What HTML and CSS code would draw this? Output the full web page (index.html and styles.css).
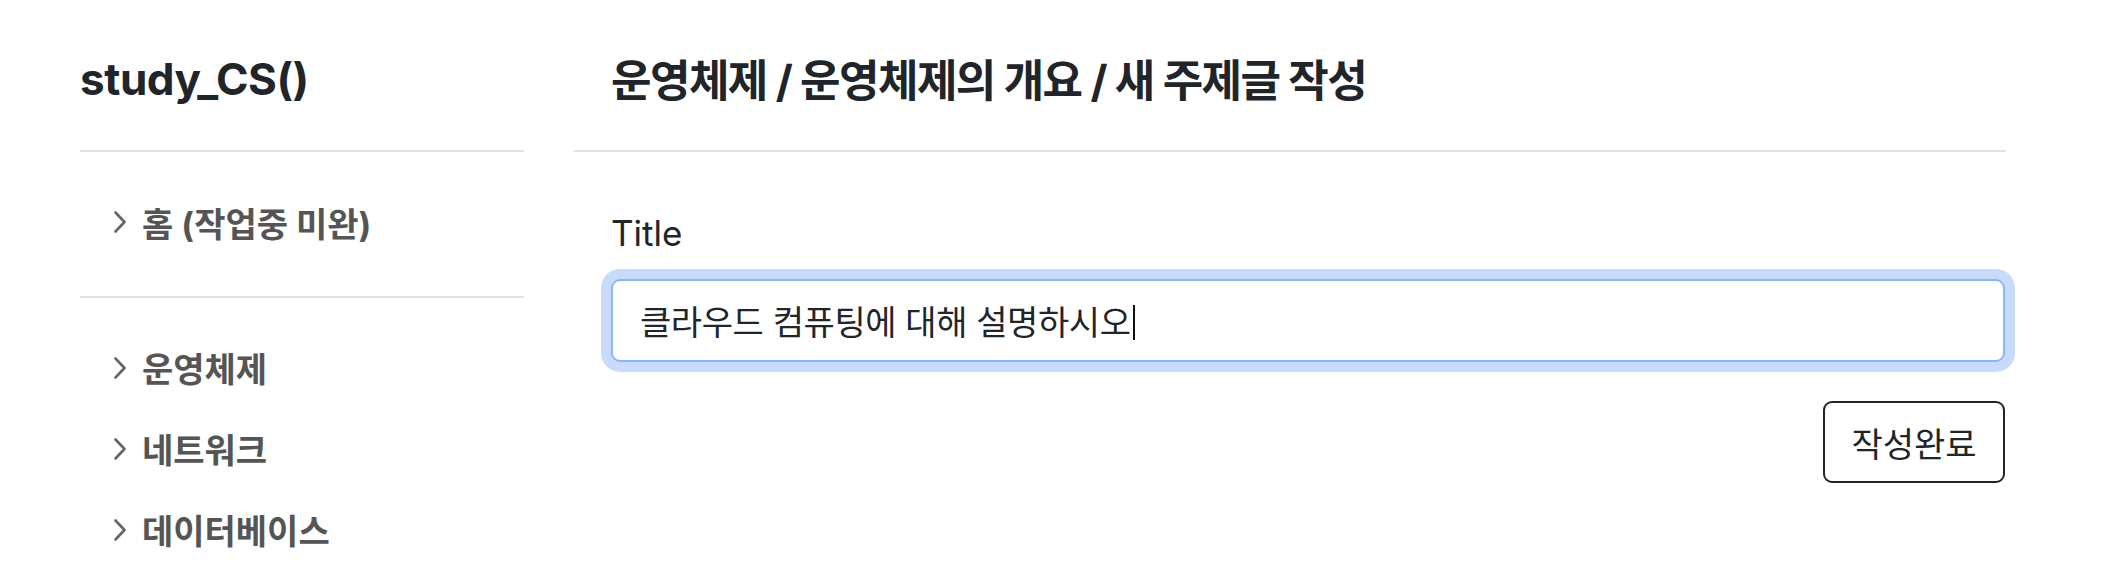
FILE: index.html
```html
<!DOCTYPE html>
<html lang="ko">
<head>
<meta charset="utf-8">
<title>study_CS()</title>
<link rel="stylesheet" href="styles.css">
</head>
<body>
<div class="layout">
  <aside class="sidebar">
    <div class="side-head">
      <h1 class="brand">study_CS()</h1>
    </div>
    <hr class="rule">
    <div class="home-block">
      <a class="nav-item" href="#">
        <svg class="chev" viewBox="0 0 12 22" width="12" height="22"><polyline points="1.5,1.5 10.5,11 1.5,20.5"/></svg>
        <span>홈 (작업중 미완)</span>
      </a>
    </div>
    <hr class="rule">
    <nav class="nav-list">
      <a class="nav-item" href="#">
        <svg class="chev" viewBox="0 0 12 22" width="12" height="22"><polyline points="1.5,1.5 10.5,11 1.5,20.5"/></svg>
        <span>운영체제</span>
      </a>
      <a class="nav-item" href="#">
        <svg class="chev" viewBox="0 0 12 22" width="12" height="22"><polyline points="1.5,1.5 10.5,11 1.5,20.5"/></svg>
        <span>네트워크</span>
      </a>
      <a class="nav-item" href="#">
        <svg class="chev" viewBox="0 0 12 22" width="12" height="22"><polyline points="1.5,1.5 10.5,11 1.5,20.5"/></svg>
        <span>데이터베이스</span>
      </a>
    </nav>
  </aside>
  <main class="main">
    <div class="main-head">
      <h2 class="crumb">운영체제 / 운영체제의 개요 / 새 주제글 작성</h2>
    </div>
    <hr class="rule">
    <form class="post-form">
      <label class="field-label">Title</label>
      <div class="text-input">클라우드 컴퓨팅에 대해 설명하시오<span class="caret"></span></div>
      <div class="actions">
        <button type="button" class="btn-outline">작성완료</button>
      </div>
    </form>
  </main>
</div>
</body>
</html>
```

FILE: styles.css
```css
* { box-sizing: border-box; }

html, body {
  margin: 0;
  padding: 0;
  background: #ffffff;
}

body {
  font-family: "Inter", "Noto Sans CJK KR", sans-serif;
  color: #212529;
}

.layout {
  display: flex;
  gap: 50px;
  padding-left: 80px;
}

.sidebar {
  width: 444px;
  flex: none;
}

.side-head {
  height: 150px;
  display: flex;
  align-items: center;
  padding-top: 8px;
}

.brand {
  margin: 0;
  font-size: 44px;
  font-weight: 700;
  letter-spacing: -0.01em;
  color: #212529;
}

.rule {
  margin: 0;
  border: 0;
  height: 2px;
  background: #dfe2e6;
}

.home-block {
  height: 144px;
  display: flex;
  align-items: center;
  padding-bottom: 4px;
}

.nav-list {
  padding-top: 29px;
  display: flex;
  flex-direction: column;
}

.nav-item {
  display: flex;
  align-items: center;
  gap: 16px;
  height: 81px;
  padding-left: 34px;
  text-decoration: none;
  color: #555555;
  font-size: 34px;
  font-weight: 700;
}

.home-block .nav-item {
  height: auto;
}

.chev {
  flex: none;
  fill: none;
  stroke: #666666;
  stroke-width: 2.6;
  stroke-linecap: round;
  stroke-linejoin: round;
}

.main {
  width: 1432px;
  flex: none;
}

.main-head {
  height: 150px;
  display: flex;
  align-items: center;
  padding-left: 37px;
  padding-top: 6px;
}

.crumb {
  margin: 0;
  font-size: 44px;
  font-weight: 700;
  letter-spacing: -0.035em;
  color: #212529;
}

.post-form {
  padding: 57px 1px 0 37px;
  display: flex;
  flex-direction: column;
}

.field-label {
  font-size: 35px;
  line-height: 48px;
  color: #212529;
  margin-bottom: 22px;
}

.text-input {
  height: 83px;
  border: 2px solid #86b7fe;
  border-radius: 9px;
  box-shadow: 0 0 0 10px #c8dbfd;
  padding: 0 27px;
  display: flex;
  align-items: center;
  font-size: 34px;
  letter-spacing: -0.012em;
  color: #212529;
  background: #ffffff;
}

.caret {
  display: inline-block;
  width: 2px;
  height: 35px;
  background: #111111;
  margin-left: 2px;
  margin-top: 4px;
}

.actions {
  display: flex;
  justify-content: flex-end;
  margin-top: 39px;
}

.btn-outline {
  width: 182px;
  height: 82px;
  border: 2px solid #212529;
  border-radius: 9px;
  background: #ffffff;
  color: #212529;
  font-family: "Inter", "Noto Sans CJK KR", sans-serif;
  font-size: 34px;
  font-weight: 400;
  padding: 0;
}
```
